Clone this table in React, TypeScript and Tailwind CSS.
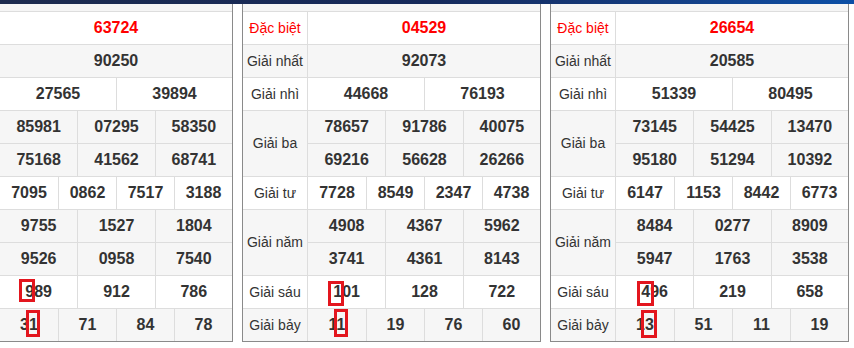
type Group = { label: string; rows: string[][] }

type Result = {
  groups: Group[]
  marks: string[]
  showLabels: boolean
}

const colClass: Record<number, string> = {
  1: "grid-cols-1",
  2: "grid-cols-2",
  3: "grid-cols-3",
  4: "grid-cols-4",
}

const results: Result[] = [
  {
    showLabels: false,
    groups: [
      { label: "Đặc biệt", rows: [["63724"]] },
      { label: "Giải nhất", rows: [["90250"]] },
      { label: "Giải nhì", rows: [["27565", "39894"]] },
      { label: "Giải ba", rows: [["85981", "07295", "58350"], ["75168", "41562", "68741"]] },
      { label: "Giải tư", rows: [["7095", "0862", "7517", "3188"]] },
      { label: "Giải năm", rows: [["9755", "1527", "1804"], ["9526", "0958", "7540"]] },
      { label: "Giải sáu", rows: [["989", "912", "786"]] },
      { label: "Giải bảy", rows: [["31", "71", "84", "78"]] },
    ],
    marks: ["left-[19px] top-[275px] w-[16px] h-[23px]", "left-[26px] top-[306px] w-[14px] h-[27px]"],
  },
  {
    showLabels: true,
    groups: [
      { label: "Đặc biệt", rows: [["04529"]] },
      { label: "Giải nhất", rows: [["92073"]] },
      { label: "Giải nhì", rows: [["44668", "76193"]] },
      { label: "Giải ba", rows: [["78657", "91786", "40075"], ["69216", "56628", "26266"]] },
      { label: "Giải tư", rows: [["7728", "8549", "2347", "4738"]] },
      { label: "Giải năm", rows: [["4908", "4367", "5962"], ["3741", "4361", "8143"]] },
      { label: "Giải sáu", rows: [["101", "128", "722"]] },
      { label: "Giải bảy", rows: [["11", "19", "76", "60"]] },
    ],
    marks: ["left-[85px] top-[277px] w-[16px] h-[25px]", "left-[91px] top-[305px] w-[14px] h-[28px]"],
  },
  {
    showLabels: true,
    groups: [
      { label: "Đặc biệt", rows: [["26654"]] },
      { label: "Giải nhất", rows: [["20585"]] },
      { label: "Giải nhì", rows: [["51339", "80495"]] },
      { label: "Giải ba", rows: [["73145", "54425", "13470"], ["95180", "51294", "10392"]] },
      { label: "Giải tư", rows: [["6147", "1153", "8442", "6773"]] },
      { label: "Giải năm", rows: [["8484", "0277", "8909"], ["5947", "1763", "3538"]] },
      { label: "Giải sáu", rows: [["496", "219", "658"]] },
      { label: "Giải bảy", rows: [["13", "51", "11", "19"]] },
    ],
    marks: ["left-[86px] top-[277px] w-[17px] h-[25px]", "left-[90px] top-[306px] w-[16px] h-[28px]"],
  },
]

function ResultTable({ result }: { result: Result }) {
  const last = result.groups.length - 1
  return (
    <div
      className={`relative shrink-0 border-x border-b border-[#8a8a8a] bg-white ${
        result.showLabels ? "w-[299px]" : "w-[234px]"
      }`}
    >
      {/* header row, mostly scrolled off */}
      <div className="h-[8px] border-b border-[#dddddd] bg-[#f5f5f5]" />
      {result.groups.map((g, gi) => {
        const special = gi === 0
        const isLast = gi === last
        return (
          <div key={g.label} className={`flex ${gi % 2 === 1 ? "bg-[#f6f6f6]" : "bg-white"}`}>
            {result.showLabels && (
              <div
                className={`w-[65px] shrink-0 flex items-center justify-center border-r border-[#dddddd] text-[14px] ${
                  special ? "text-[#ff0000]" : "text-[#333333]"
                } ${isLast ? "" : "border-b"}`}
              >
                {g.label}
              </div>
            )}
            <div className="flex-1 flex flex-col">
              {g.rows.map((row, ri) => (
                <div
                  key={ri}
                  className={`grid ${colClass[row.length]} ${
                    isLast && ri === g.rows.length - 1 ? "h-[32px]" : "h-[33px] border-b border-[#dddddd]"
                  }`}
                >
                  {row.map((n, ci) => (
                    <div
                      key={ci}
                      className={`flex items-center justify-center font-bold text-[16px] ${
                        special ? "text-[#ff0000]" : "text-[#333333]"
                      } ${ci > 0 ? "border-l border-[#dddddd]" : ""}`}
                    >
                      {n}
                    </div>
                  ))}
                </div>
              ))}
            </div>
          </div>
        )
      })}
      {result.marks.map((m) => (
        <div key={m} className={`absolute border-[3px] border-[#e3161e] ${m}`} />
      ))}
    </div>
  )
}

export default function App() {
  return (
    <div className="w-[854px] h-[348px] overflow-hidden bg-white font-['Liberation_Sans',Arial,sans-serif]">
      <div className="h-[4px] bg-gradient-to-r from-[#1c2a4e] via-[#15295a] to-[#0b4fa6]" />
      <div className="flex gap-[9px] -ml-[1px]">
        {results.map((r, i) => (
          <ResultTable key={i} result={r} />
        ))}
      </div>
    </div>
  )
}
